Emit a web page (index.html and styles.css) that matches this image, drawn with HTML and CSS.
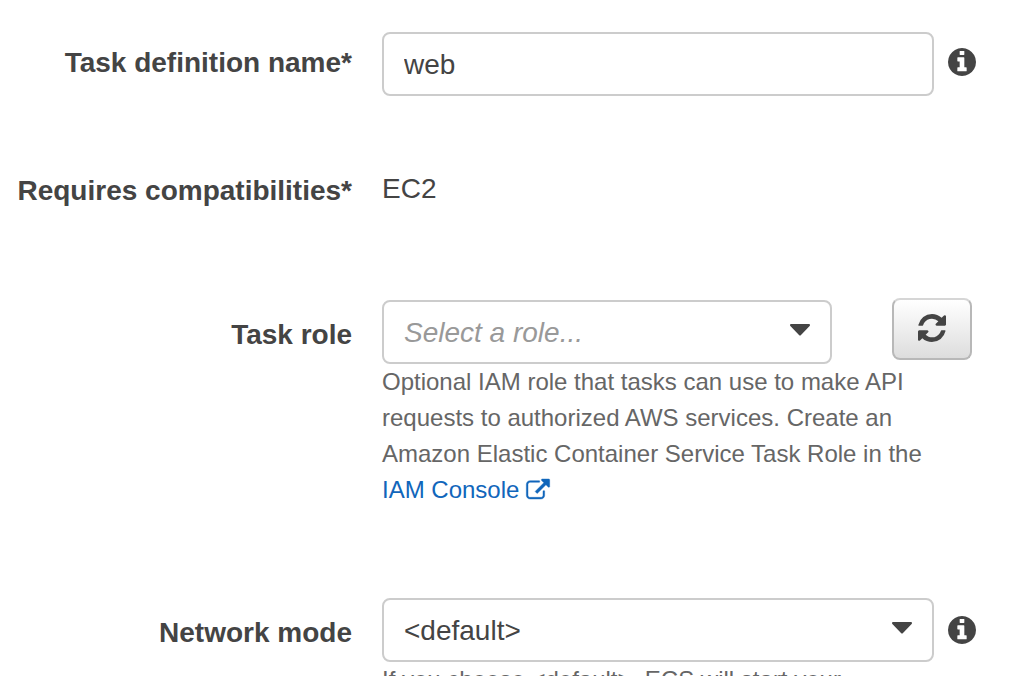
FILE: index.html
```html
<!DOCTYPE html>
<html lang="en">
<head>
<meta charset="utf-8">
<meta name="viewport" content="width=device-width, initial-scale=1">
<title>Task definition</title>
<link rel="stylesheet" href="styles.css">
</head>
<body>
<svg class="sprite" aria-hidden="true">
  <symbol id="icon-info" viewBox="128 128 1536 1536"><path d="M1152 1376v-160q0-14-9-23t-23-9h-96v-512q0-14-9-23t-23-9h-320q-14 0-23 9t-9 23v160q0 14 9 23t23 9h96v320h-96q-14 0-23 9t-9 23v160q0 14 9 23t23 9h448q14 0 23-9t9-23zm-128-896v-160q0-14-9-23t-23-9h-192q-14 0-23 9t-9 23v160q0 14 9 23t23 9h192q14 0 23-9t9-23zm640 416q0 209-103 385.5t-279.5 279.5-385.5 103-385.5-103-279.5-279.5-103-385.5 103-385.5 279.5-279.5 385.5-103 385.5 103 279.5 279.5 103 385.5z"/></symbol>
  <symbol id="icon-caret" viewBox="0 0 20 12"><path d="M1 0h18q1 0 1 1t-.6 1.300l-8.400 8.700q-1 1-2 0L.6 2.300Q0 2 0 1t1-1z"/></symbol>
</svg>
<form class="form">
  <div class="row row-name">
    <label class="label" for="name">Task definition name*</label>
    <div class="field">
      <input class="control" id="name" type="text" value="web">
    </div>
    <button class="info" type="button" aria-label="About task definition name"><svg><use href="#icon-info"/></svg></button>
  </div>

  <div class="row row-compat">
    <span class="label">Requires compatibilities*</span>
    <span class="value">EC2</span>
  </div>

  <div class="row row-role">
    <label class="label" for="role">Task role</label>
    <div class="field">
      <div class="select">
        <select class="control placeholder" id="role"><option>Select a role...</option></select>
        <svg class="caret" aria-hidden="true"><use href="#icon-caret"/></svg>
      </div>
      <p class="help">Optional IAM role that tasks can use to make API requests to authorized AWS services. Create an Amazon Elastic Container Service Task Role in the <a class="link" href="#">IAM Console <svg class="external" viewBox="0 0 1792 1536" aria-hidden="true"><path d="M1408 928v320q0 119-84.500 203.500t-203.500 84.500h-832q-119 0-203.500-84.500t-84.500-203.500v-832q0-119 84.500-203.500t203.500-84.500h704q14 0 23 9t9 23v64q0 14-9 23t-23 9h-704q-66 0-113 47t-47 113v832q0 66 47 113t113 47h832q66 0 113-47t47-113v-320q0-14 9-23t23-9h64q14 0 23 9t9 23zm384-864v512q0 26-19 45t-45 19-45-19l-176-176-652 652q-10 10-23 10t-23-10l-114-114q-10-10-10-23t10-23l652-652-176-176q-19-19-19-45t19-45 45-19h512q26 0 45 19t19 45z"/></svg></a></p>
    </div>
    <button class="refresh" type="button" aria-label="Refresh roles"><svg viewBox="128 128 1536 1536"><path d="M1639 1056q0 5-1 7-64 268-268 434.500t-478 166.500q-146 0-282.500-55t-243.500-157l-129 129q-19 19-45 19t-45-19-19-45v-448q0-26 19-45t45-19h448q26 0 45 19t19 45-19 45l-137 137q71 66 161 102t187 36q134 0 250-65t186-179q11-17 53-117 8-23 30-23h192q13 0 22.500 9.500t9.500 22.500zm25-800v448q0 26-19 45t-45 19h-448q-26 0-45-19t-19-45 19-45l138-138q-148-137-349-137-134 0-250 65t-186 179q-11 17-53 117-8 23-30 23h-199q-13 0-22.500-9.500t-9.500-22.500v-7q65-268 270-434.500t480-166.500q146 0 284 55.500t245 156.500l130-129q19-19 45-19t45 19 19 45z"/></svg></button>
  </div>

  <div class="row row-network">
    <label class="label" for="network">Network mode</label>
    <div class="field">
      <div class="select">
        <select class="control" id="network"><option>&lt;default&gt;</option></select>
        <svg class="caret" aria-hidden="true"><use href="#icon-caret"/></svg>
      </div>
      <p class="help">If you choose &lt;default&gt;, ECS will start your</p>
    </div>
    <button class="info" type="button" aria-label="About network mode"><svg><use href="#icon-info"/></svg></button>
  </div>
</form>
</body>
</html>
```

FILE: styles.css
```css
* {
  box-sizing: border-box;
}

body {
  margin: 0;
  background: #fff;
  color: #444;
  font: 28px/38px "Liberation Sans", Arial, sans-serif;
}

svg {
  display: block;
  fill: currentColor;
}

.sprite {
  display: none;
}

.form {
  height: 100vh;
  padding: 32px 56px 0 0;
  overflow-y: auto;
  scrollbar-width: none;
}

.row {
  display: grid;
  grid-template-columns: 352px minmax(0, 1fr) 28px;
  align-items: start;
}

.row-name {
  margin-bottom: 74px;
}

.row-compat {
  margin-bottom: 90px;
}

.row-role {
  margin-bottom: 90px;
}

.label {
  padding-top: 16px;
  font-weight: bold;
  text-align: right;
}

.row-name .label {
  padding-top: 12px;
}

.row-compat .label {
  padding-top: 2px;
}

.field {
  padding: 0 14px 0 30px;
}

.value {
  padding-left: 30px;
}

.control {
  display: block;
  width: 100%;
  height: 64px;
  margin: 0;
  padding: 2px 20px 0;
  border: 2px solid #ccc;
  border-radius: 8px;
  background: #fff;
  color: #444;
  font: inherit;
  appearance: none;
}

.placeholder {
  color: #999;
  font-style: italic;
}

.select {
  display: grid;
  align-items: center;
}

.select > * {
  grid-area: 1 / 1;
}

.row-role .select {
  margin-right: 102px;
}

.caret {
  justify-self: end;
  width: 20px;
  height: 12px;
  margin: 0 22px 4px 0;
  pointer-events: none;
}

.info {
  width: 28px;
  height: 28px;
  margin-top: 16px;
  padding: 0;
  border: 0;
  background: none;
  color: #444;
}

.row-network .info {
  margin-top: 18px;
}

.info svg {
  width: 28px;
  height: 28px;
}

.refresh {
  display: grid;
  place-items: center;
  justify-self: end;
  width: 80px;
  height: 62px;
  margin: -2px 4px 0 0;
  padding: 0 0 2px;
  border: 2px solid #b8b8b8;
  border-top-color: #d6d6d6;
  border-radius: 8px;
  background: linear-gradient(#fff, #ddd);
  color: #444;
}

.refresh svg {
  width: 28px;
  height: 28px;
}

.help {
  margin: 0;
  color: #666;
  font-size: 24px;
  line-height: 36px;
}

.link {
  color: #1166bb;
  text-decoration: none;
}

.external {
  display: inline-block;
  width: 24px;
  height: 20px;
  vertical-align: -1px;
  stroke: currentColor;
  stroke-width: 32px;
  overflow: visible;
}
```
